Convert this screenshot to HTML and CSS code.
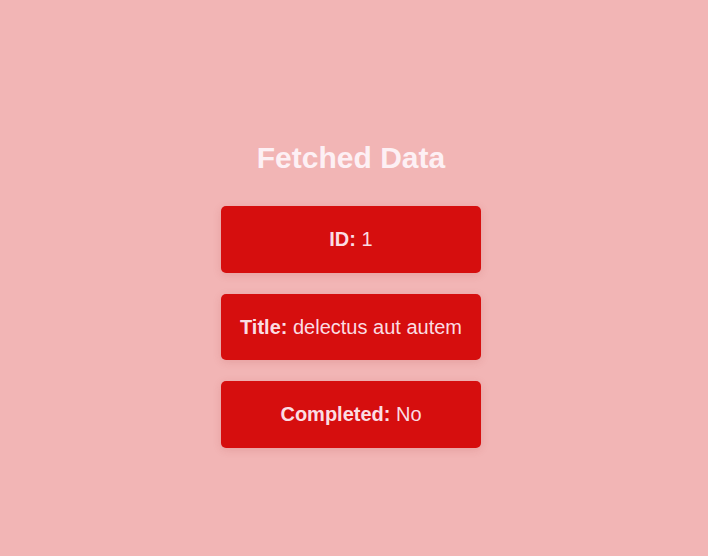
FILE: index.html
```html
<!DOCTYPE html>
<html>
<head>
<meta charset="utf-8">
<link rel="stylesheet" href="styles.css">
</head>
<body>
<main class="page">
  <h1 class="title">Fetched Data</h1>
  <div class="cards">
    <div class="card"><strong>ID:</strong> 1</div>
    <div class="card"><strong>Title:</strong> delectus aut autem</div>
    <div class="card"><strong>Completed:</strong> No</div>
  </div>
</main>
</body>
</html>
```
FILE: styles.css
```css
html, body {
  margin: 0;
  padding: 0;
}
body {
  background: #f2b5b5;
  font-family: "Liberation Sans", Arial, sans-serif;
}
.page {
  min-height: 556px;
  box-sizing: border-box;
  padding: 140px 6px 0 0;
  display: flex;
  flex-direction: column;
  align-items: center;
}
.title {
  margin: 0 0 31px;
  font-size: 30px;
  font-weight: bold;
  color: #fdf0f4;
  line-height: 35px;
}
.cards {
  display: flex;
  flex-direction: column;
  gap: 21px;
}
.card {
  width: 260px;
  box-sizing: border-box;
  padding: 21px 10px;
  line-height: 24.5px;
  font-size: 20px;
  text-align: center;
  background: #d60e0e;
  color: #fbdde3;
  border-radius: 5px;
  box-shadow: 0 2px 8px rgba(160, 40, 40, 0.15);
}
.card strong {
  font-weight: bold;
}
```
